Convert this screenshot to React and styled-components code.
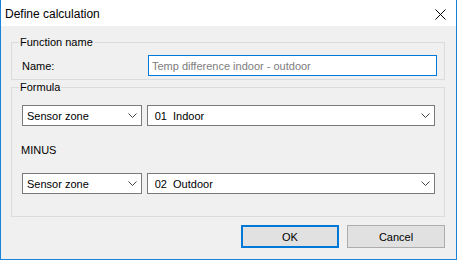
import React from "react";
import styled, { createGlobalStyle } from "styled-components";

const Global = createGlobalStyle`
  html, body { margin: 0; padding: 0; background: #ffffff; }
  body { font-family: "Liberation Sans", Arial, sans-serif; font-size: 11px; color: #000; }
  * { box-sizing: border-box; }
`;

const Window = styled.div`
  width: 457px;
  height: 260px;
  display: flex;
  flex-direction: column;
  border: 1px solid #1883d7;
  border-top: none;
  background: #f0f0f0;
`;

const TitleBar = styled.div`
  height: 26px;
  flex: none;
  background: #ffffff;
  display: flex;
  align-items: center;
  justify-content: space-between;
  padding: 0 10px 0 4px;
`;

const Title = styled.span`
  font-size: 12px;
  line-height: 14px;
  padding-top: 1px;
`;

const CloseBtn = styled.svg`
  width: 11px;
  height: 11px;
  margin-top: 2px;
`;

const Body = styled.div`
  flex: 1;
  display: flex;
  flex-direction: column;
  padding: 16px 11px 11px 10px;
`;

const Group = styled.div`
  position: relative;
  border: 1px solid #dcdcdc;
  display: flex;
  flex-direction: column;
  padding: ${(p) => p.$pad};
  margin-bottom: ${(p) => p.$mb || "0px"};
`;

const Legend = styled.span`
  position: absolute;
  top: -8px;
  left: 7px;
  padding: 0 1px;
  background: #f0f0f0;
  line-height: 14px;
`;

const Row = styled.div`
  display: flex;
  align-items: center;
  gap: ${(p) => p.$gap || "0px"};
`;

const Label = styled.span`
  width: 126px;
  flex: none;
  line-height: 14px;
`;

const Input = styled.div`
  width: 290px;
  height: 21px;
  border: 1px solid #0078d7;
  background: #fff;
  color: #7d7d7d;
  padding: 0 3px;
  display: flex;
  align-items: center;
  white-space: pre;
`;

const Combo = styled.div`
  width: ${(p) => p.$w}px;
  height: 21px;
  border: 1px solid #7a7a7a;
  background: #fff;
  display: flex;
  align-items: center;
  justify-content: space-between;
  padding: 0 4px 0 ${(p) => p.$pl}px;
  white-space: pre;
`;

const Chevron = styled.svg`
  width: 9px;
  height: 5px;
  flex: none;
`;

const Minus = styled.div`
  line-height: 14px;
  margin: 17px 0 16px -1px;
`;

const Buttons = styled.div`
  display: flex;
  justify-content: flex-end;
  gap: 8px;
  margin-top: 8px;
`;

const Button = styled.div`
  width: 98px;
  height: 23px;
  background: #e1e1e1;
  border: ${(p) => (p.$default ? "2px solid #0078d7" : "1px solid #adadad")};
  display: flex;
  align-items: center;
  justify-content: center;
`;

const ChevronIcon = () => (
  <Chevron viewBox="0 0 9 5">
    <path d="M0.5 0.5 L4.5 4.5 L8.5 0.5" fill="none" stroke="#444" strokeWidth="1" />
  </Chevron>
);

const SelectBox = ({ w, pl, children }) => (
  <Combo $w={w} $pl={pl}>
    <span>{children}</span>
    <ChevronIcon />
  </Combo>
);

export default function App() {
  return (
    <>
      <Global />
      <Window>
        <TitleBar>
          <Title>Define calculation</Title>
          <CloseBtn viewBox="0 0 11 11">
            <path d="M0.5 0.5 L10.5 10.5 M10.5 0.5 L0.5 10.5" stroke="#000" strokeWidth="1" />
          </CloseBtn>
        </TitleBar>
        <Body>
          <Group $pad="12px 7px 3px 10px" $mb="7px">
            <Legend>Function name</Legend>
            <Row>
              <Label>Name:</Label>
              <Input>Temp difference indoor - outdoor</Input>
            </Row>
          </Group>
          <Group $pad="17px 9px 22px 10px">
            <Legend>Formula</Legend>
            <Row $gap="5px">
              <SelectBox w={120} pl={4}>Sensor zone</SelectBox>
              <SelectBox w={289} pl={7}>01  Indoor</SelectBox>
            </Row>
            <Minus>MINUS</Minus>
            <Row $gap="5px">
              <SelectBox w={120} pl={4}>Sensor zone</SelectBox>
              <SelectBox w={289} pl={7}>02  Outdoor</SelectBox>
            </Row>
          </Group>
          <Buttons>
            <Button $default>OK</Button>
            <Button>Cancel</Button>
          </Buttons>
        </Body>
      </Window>
    </>
  );
}
